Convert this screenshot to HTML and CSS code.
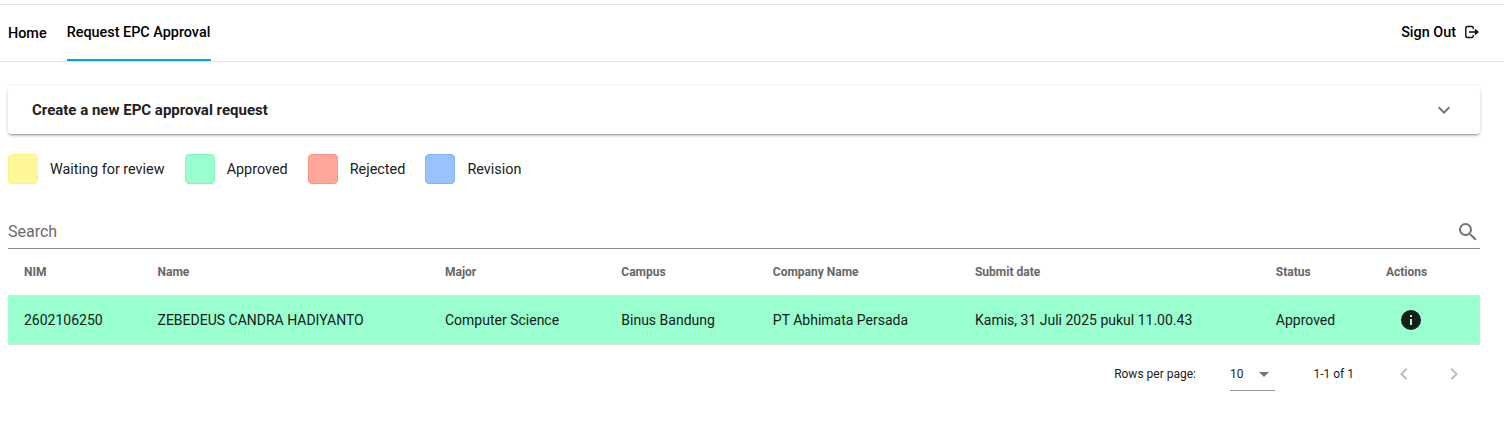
FILE: index.html
```html
<!DOCTYPE html>
<html lang="en">
<head>
<meta charset="utf-8">
<title>Request EPC Approval</title>
<link rel="stylesheet" href="styles.css">
</head>
<body>
<header class="topbar">
  <nav class="tabs">
    <a class="tab home">Home</a>
    <a class="tab active">Request EPC Approval</a>
  </nav>
  <a class="signout"><span>Sign Out</span>
    <svg width="15" height="14" viewBox="0 0 15 14" fill="none" stroke="#111" stroke-width="1.4"><path d="M8.2 4V2.8Q8.2 1.5 6.9 1.5H2.2Q0.8 1.5 0.8 3V11Q0.8 12.5 2.2 12.5H6.9Q8.2 12.5 8.2 11.2V10M4 7H12"/><path fill="#111" stroke="none" d="M9.8 3.5L14 7L9.8 10.5Z"/></svg>
  </a>
</header>
<main class="content">
  <section class="panel">
    <h2 class="panel-title">Create a new EPC approval request</h2>
    <svg class="chevron" width="24" height="24" viewBox="0 0 24 24"><path fill="#757575" d="M7.41 8.58L12 13.17l4.59-4.59L18 10l-6 6-6-6z"/></svg>
  </section>
  <ul class="legend">
    <li class="legend-item"><span class="swatch waiting"></span>Waiting for review</li>
    <li class="legend-item"><span class="swatch approved"></span>Approved</li>
    <li class="legend-item"><span class="swatch rejected"></span>Rejected</li>
    <li class="legend-item"><span class="swatch revision"></span>Revision</li>
  </ul>
  <div class="search">
    <span>Search</span>
    <svg class="magnify" width="24" height="24" viewBox="0 0 24 24"><path fill="#757575" d="M9.5 3A6.5 6.5 0 0 1 16 9.5c0 1.61-.59 3.09-1.56 4.23l.27.27h.79l5 5-1.5 1.5-5-5v-.79l-.27-.27A6.516 6.516 0 0 1 9.5 16a6.5 6.5 0 0 1 0-13m0 2C7 5 5 7 5 9.5S7 14 9.5 14 14 12 14 9.5 12 5 9.5 5z"/></svg>
  </div>
  <table class="grid">
    <colgroup><col class="c-nim"><col class="c-name"><col class="c-major"><col class="c-campus"><col class="c-company"><col class="c-date"><col class="c-status"><col class="c-actions"></colgroup>
    <thead>
      <tr><th>NIM</th><th>Name</th><th>Major</th><th>Campus</th><th>Company Name</th><th>Submit date</th><th>Status</th><th>Actions</th></tr>
    </thead>
    <tbody>
      <tr><td>2602106250</td><td>ZEBEDEUS CANDRA HADIYANTO</td><td>Computer Science</td><td>Binus Bandung</td><td>PT Abhimata Persada</td><td>Kamis, 31 Juli 2025 pukul 11.00.43</td><td>Approved</td>
      <td><svg class="info" width="24" height="24" viewBox="0 0 24 24"><path fill="#142019" d="M13 9h-2V7h2m0 10h-2v-6h2m-1-9A10 10 0 0 0 2 12a10 10 0 0 0 10 10 10 10 0 0 0 10-10A10 10 0 0 0 12 2z"/></svg></td></tr>
    </tbody>
  </table>
  <footer class="pager">
    <span>Rows per page:</span>
    <div class="select"><span>10</span><svg class="caret" width="24" height="24" viewBox="0 0 24 24"><path fill="#757575" d="M7 10l5 5 5-5z"/></svg></div>
    <span class="range">1-1 of 1</span>
    <svg class="prev" width="24" height="24" viewBox="0 0 24 24"><path fill="#bdbdbd" d="M15.41 16.58L10.83 12l4.58-4.59L14 6l-6 6 6 6z"/></svg>
    <svg class="next" width="24" height="24" viewBox="0 0 24 24"><path fill="#bdbdbd" d="M8.59 16.58L13.17 12 8.59 7.41 10 6l6 6-6 6z"/></svg>
  </footer>
</main>
</body>
</html>
```
FILE: styles.css
```css
* { box-sizing: border-box; }
body {
  margin: 0;
  padding-top: 4px;
  background: #fff;
  color: #212121;
  font-family: Roboto, sans-serif;
  font-size: 14px;
  overflow: hidden;
}
svg { display: block; flex: none; }
.topbar {
  display: flex;
  justify-content: space-between;
  height: 58px;
  padding: 0 24px 0 8px;
  border-top: 1px solid #e4e4e4;
  border-bottom: 1px solid #e4e4e4;
  color: #000;
  font-size: 14.4px;
  font-weight: 500;
}
.tabs { display: flex; gap: 20px; }
.tab { display: flex; align-items: center; height: 56px; }
.active { padding-right: 0.5px; border-bottom: 2px solid #00a5df; }
.signout { display: flex; align-items: center; gap: 9px; height: 54px; }
.content { padding: 24px 24px 0 8px; }
.panel {
  display: flex;
  align-items: center;
  justify-content: space-between;
  height: 48px;
  padding: 0 24px 0 24px;
  border-radius: 4px;
  box-shadow: 0 3px 1px -2px rgba(0,0,0,.2), 0 2px 2px rgba(0,0,0,.14), 0 1px 5px rgba(0,0,0,.12);
}
.panel-title { margin: 0; font-size: 15px; font-weight: 700; }
.legend {
  display: flex;
  gap: 20.1px;
  margin: 20px 0 0;
  padding: 0;
  list-style: none;
  font-size: 14.4px;
}
.legend-item { display: flex; align-items: center; gap: 12px; height: 30px; }
.swatch { width: 30px; height: 30px; border: 1px solid; border-radius: 4px; }
.waiting { background: #fff599; border-color: #fff085; }
.approved { background: #99ffcf; border-color: #80f5bd; }
.rejected { background: #ffa799; border-color: #ff9180; }
.revision { background: #99c2ff; border-color: #80b3ff; }
.search {
  display: flex;
  align-items: center;
  justify-content: space-between;
  height: 35px;
  margin-top: 30px;
  border-bottom: 1px solid #8c8c8c;
  color: #6b6b6b;
  font-size: 16px;
}
.magnify { margin-top: 2px; }
.grid { width: 1472px; table-layout: fixed; border-collapse: separate; border-spacing: 0; }
.c-nim { width: 133.5px; }
.c-name { width: 287.5px; }
.c-major { width: 176.3px; }
.c-campus { width: 151.5px; }
.c-company { width: 202.2px; }
.c-date { width: 300.8px; }
.c-status { width: 110.2px; }
.c-actions { width: 110px; }
.grid th, .grid td { padding: 0 16px; text-align: left; white-space: nowrap; }
.grid th { height: 47px; border-bottom: 1px solid #e0e0e0; color: #666; font-size: 12px; font-weight: 700; }
.grid td { height: 49px; border-bottom: 1px solid #e0e0e0; background: #99ffcf; color: #142019; }
.info { margin-left: 13px; }
.pager { display: flex; align-items: center; justify-content: flex-end; height: 58px; padding-right: 14px; font-size: 12px; }
.select {
  display: flex;
  align-items: center;
  justify-content: space-between;
  width: 45px;
  height: 34px;
  margin-left: 34px;
  border-bottom: 1px solid #949494;
}
.caret { margin-right: -1px; }
.range { margin-left: 38.5px; }
.prev { margin-left: 38px; }
.next { margin-left: 26px; }
```
